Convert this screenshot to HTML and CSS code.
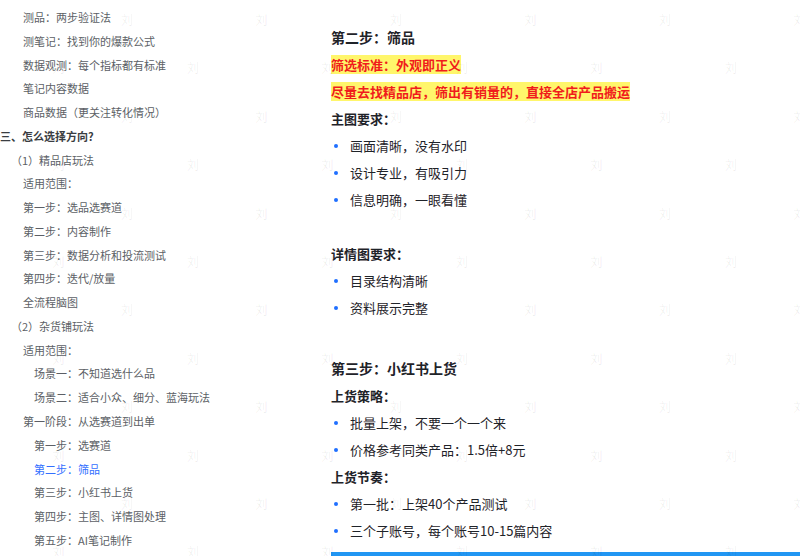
FILE: index.html
```html
<!DOCTYPE html>
<html lang="zh-CN">
<head>
<meta charset="utf-8">
<title>筛品</title>
<link rel="stylesheet" href="styles.css">
</head>
<body>
<div class="page">
  <nav class="toc">
    <div class="toc-item l2">测品：两步验证法</div>
    <div class="toc-item l2">测笔记：找到你的爆款公式</div>
    <div class="toc-item l2">数据观测：每个指标都有标准</div>
    <div class="toc-item l2">笔记内容数据</div>
    <div class="toc-item l2">商品数据（更关注转化情况）</div>
    <div class="toc-item l0">三、怎么选择方向?</div>
    <div class="toc-item l1">（1）精品店玩法</div>
    <div class="toc-item l2">适用范围：</div>
    <div class="toc-item l2">第一步：选品选赛道</div>
    <div class="toc-item l2">第二步：内容制作</div>
    <div class="toc-item l2">第三步：数据分析和投流测试</div>
    <div class="toc-item l2">第四步：迭代/放量</div>
    <div class="toc-item l2">全流程脑图</div>
    <div class="toc-item l1">（2）杂货铺玩法</div>
    <div class="toc-item l2">适用范围：</div>
    <div class="toc-item l3">场景一：不知道选什么品</div>
    <div class="toc-item l3">场景二：适合小众、细分、蓝海玩法</div>
    <div class="toc-item l2">第一阶段：从选赛道到出单</div>
    <div class="toc-item l3">第一步：选赛道</div>
    <div class="toc-item l3 active">第二步：筛品</div>
    <div class="toc-item l3">第三步：小红书上货</div>
    <div class="toc-item l3">第四步：主图、详情图处理</div>
    <div class="toc-item l3">第五步：AI笔记制作</div>
  </nav>
  <main class="doc">
    <h2 class="doc-h">第二步：筛品</h2>
    <p class="doc-p"><span class="mark">筛选标准：外观即正义</span></p>
    <p class="doc-p"><span class="mark">尽量去找精品店，筛出有销量的，直接全店产品搬运</span></p>
    <p class="doc-p strong">主图要求：</p>
    <ul class="doc-list">
      <li>画面清晰，没有水印</li>
      <li>设计专业，有吸引力</li>
      <li>信息明确，一眼看懂</li>
    </ul>
    <p class="doc-p empty"></p>
    <p class="doc-p strong">详情图要求：</p>
    <ul class="doc-list">
      <li>目录结构清晰</li>
      <li>资料展示完整</li>
    </ul>
    <p class="doc-p empty"></p>
    <h2 class="doc-h next">第三步：小红书上货</h2>
    <p class="doc-p strong">上货策略：</p>
    <ul class="doc-list">
      <li>批量上架，不要一个一个来</li>
      <li>价格参考同类产品：1.5倍+8元</li>
    </ul>
    <p class="doc-p strong">上货节奏：</p>
    <ul class="doc-list">
      <li>第一批：上架40个产品测试</li>
      <li>三个子账号，每个账号10-15篇内容</li>
    </ul>
    <div class="blue-bar"></div>
  </main>
</div>
<div class="watermark" aria-hidden="true">
  <div class="wm-row a"><span>刘</span><span>刘</span><span>刘</span><span>刘</span><span>刘</span><span>刘</span><span>刘</span></div>
  <div class="wm-row b"><span>刘</span><span>刘</span><span>刘</span><span>刘</span><span>刘</span><span>刘</span></div>
  <div class="wm-row a"><span>刘</span><span>刘</span><span>刘</span><span>刘</span><span>刘</span><span>刘</span><span>刘</span></div>
  <div class="wm-row b"><span>刘</span><span>刘</span><span>刘</span><span>刘</span><span>刘</span><span>刘</span></div>
  <div class="wm-row a"><span>刘</span><span>刘</span><span>刘</span><span>刘</span><span>刘</span><span>刘</span><span>刘</span></div>
  <div class="wm-row b"><span>刘</span><span>刘</span><span>刘</span><span>刘</span><span>刘</span><span>刘</span></div>
  <div class="wm-row a"><span>刘</span><span>刘</span><span>刘</span><span>刘</span><span>刘</span><span>刘</span><span>刘</span></div>
  <div class="wm-row b"><span>刘</span><span>刘</span><span>刘</span><span>刘</span><span>刘</span><span>刘</span></div>
  <div class="wm-row a"><span>刘</span><span>刘</span><span>刘</span><span>刘</span><span>刘</span><span>刘</span><span>刘</span></div>
  <div class="wm-row b"><span>刘</span><span>刘</span><span>刘</span><span>刘</span><span>刘</span><span>刘</span></div>
  <div class="wm-row a"><span>刘</span><span>刘</span><span>刘</span><span>刘</span><span>刘</span><span>刘</span><span>刘</span></div>
  <div class="wm-row b"><span>刘</span><span>刘</span><span>刘</span><span>刘</span><span>刘</span><span>刘</span></div>
</div>
</body>
</html>
```

FILE: styles.css
```css
html, body {
  margin: 0;
  padding: 0;
  background: #ffffff;
}
body {
  width: 800px;
  height: 556px;
  overflow: hidden;
  position: relative;
  font-family: "Noto Sans CJK SC", "Noto Sans", sans-serif;
}
.page {
  display: flex;
  align-items: flex-start;
  height: 556px;
}
.toc {
  width: 331px;
  flex: none;
  padding-top: 6px;
  box-sizing: border-box;
}
.toc-item {
  font-size: 11px;
  line-height: 23.77px;
  height: 23.77px;
  color: #5c5f66;
  white-space: nowrap;
}
.toc-item.l0 {
  padding-left: 0;
  font-weight: 700;
  color: #3a3d42;
}
.toc-item.l1 { padding-left: 11px; }
.toc-item.l2 { padding-left: 23px; }
.toc-item.l3 { padding-left: 34px; }
.toc-item.active { color: #3370ff; }

.doc {
  flex: 1;
  padding-top: 24px;
  color: #1f2329;
}
.doc-h {
  margin: 0;
  font-size: 14px;
  font-weight: 700;
  line-height: 27px;
  color: #1f2329;
}
.doc-h.next { margin-top: 7px; }
.doc-p {
  margin: 0;
  font-size: 13px;
  line-height: 27px;
  min-height: 27px;
}
.doc-p.strong { font-weight: 700; }
.mark {
  background: #fff66b;
  color: #f01c1c;
  font-weight: 700;
}
.doc-list {
  list-style: none;
  margin: 0;
  padding: 0;
}
.doc-list li {
  position: relative;
  font-size: 13px;
  line-height: 27px;
  padding-left: 19px;
  color: #1f2329;
}
.doc-list li::before {
  content: "";
  position: absolute;
  left: 3px;
  top: 11.5px;
  width: 4px;
  height: 4px;
  border-radius: 50%;
  background: #1f6fff;
}
.blue-bar {
  margin-top: 8px;
  height: 4px;
  background: #2196f3;
}

.watermark {
  position: absolute;
  left: 0;
  top: 0;
  width: 800px;
  height: 556px;
  overflow: hidden;
  pointer-events: none;
  padding-top: 12px;
  box-sizing: border-box;
}
.wm-row {
  display: flex;
  height: 48.4px;
  white-space: nowrap;
}
.wm-row.a { margin-left: -13.5px; }
.wm-row.b { margin-left: 52.5px; }
.wm-row span {
  flex: none;
  width: 134.5px;
  font-size: 12px;
  line-height: 16px;
  color: rgba(0, 0, 0, 0.07);
}
```
